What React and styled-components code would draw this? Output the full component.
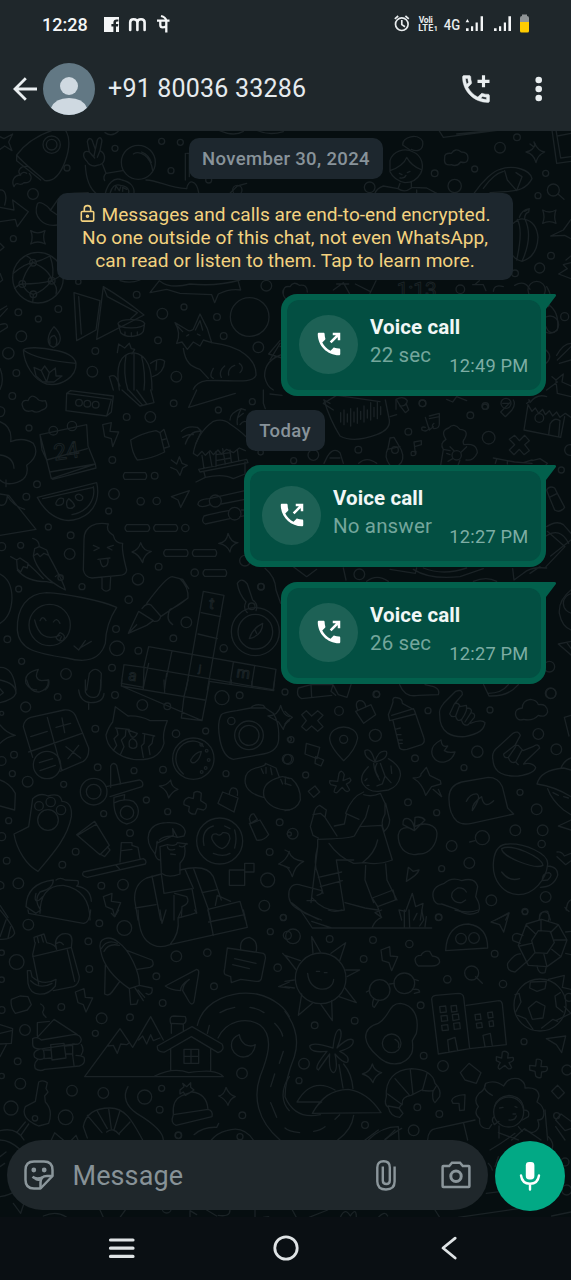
import React from "react";
import styled, { createGlobalStyle } from "styled-components";

const Global = createGlobalStyle`
  html, body { margin: 0; background: #0b1014; }
  * { box-sizing: border-box; }
  body { font-family: Roboto, "Noto Sans", sans-serif; }
`;

const Screen = styled.div`
  width: 571px;
  height: 1280px;
  display: grid;
  grid-template-rows: 131px 1086px 63px;
  overflow: hidden;
`;

const Header = styled.header`
  background: #1f272b;
  display: flex;
  flex-direction: column;
`;

const StatusBar = styled.div`
  height: 48px;
  padding: 0 42px 0 42px;
  display: flex;
  align-items: center;
  color: #f4f6f7;
`;

const Clock = styled.span`
  font-size: 18px;
  font-weight: 500;
  width: 62px;
`;

const StatusIcons = styled.svg`
  display: block;
  margin-left: ${(p) => (p.$end ? "auto" : 0)};
`;

const TitleBar = styled.div`
  height: 82px;
  display: flex;
  align-items: center;
  padding-left: 11px;
`;

const Icon = styled.svg`
  display: block;
  flex: none;
  margin-left: ${(p) => p.$gap || 0}px;
`;

const Contact = styled.h1`
  margin: 0 auto 0 13px;
  font-size: 25px;
  font-weight: 400;
  line-height: 30px;
  letter-spacing: 0.2px;
  color: #e6ebee;
`;

const Chat = styled.main`
  position: relative;
  background: #060e10;
  display: flex;
  flex-direction: column;
  padding: 7px 7px 6px;
`;

const Wallpaper = styled.svg`
  position: absolute;
  inset: 0;
  width: 571px;
  height: 1086px;
  fill: none;
  stroke: #1a2225;
  stroke-width: 4;
  stroke-linecap: round;
  stroke-linejoin: round;
`;

const Thread = styled.section`
  position: relative;
  flex: 1;
  display: flex;
  flex-direction: column;
`;

const DateChip = styled.div`
  align-self: center;
  width: ${(p) => p.$w}px;
  height: 41px;
  margin-top: ${(p) => p.$top || 0}px;
  margin-left: ${(p) => p.$shift || 0}px;
  border-radius: 10px;
  background: #1d272e;
  color: #88939a;
  font-size: 18.5px;
  font-weight: 500;
  line-height: 43px;
  text-align: center;
  letter-spacing: 0.35px;
  white-space: nowrap;
`;

const Notice = styled.div`
  align-self: center;
  width: 456px;
  height: 87px;
  margin: 14px 0 0 -2px;
  padding: 10px 0 0;
  border-radius: 10px;
  background: #1d272e;
  color: #f3d27f;
  font-size: 19.1px;
  line-height: 23px;
  text-align: center;
  white-space: nowrap;
`;

const NoticeLine = styled.div`
  display: flex;
  justify-content: center;
  gap: 7px;

  svg {
    margin-top: 1px;
  }
`;

const Bubble = styled.article`
  position: relative;
  align-self: flex-end;
  width: ${(p) => p.$w}px;
  height: 101.5px;
  margin: ${(p) => p.$top}px 19px 0 0;
  padding: 5.5px;
  border-radius: 16px 0 16px 16px;
  background: #02604c;
`;

const Tail = styled.svg`
  position: absolute;
  top: 0;
  right: -11px;
`;

const CallCard = styled.div`
  height: 100%;
  display: flex;
  padding: 15px 12px 0 12.5px;
  border-radius: 12px;
  background: #034f42;
`;

const CallBadge = styled.div`
  width: 59px;
  height: 59px;
  flex: none;
  border-radius: 50%;
  background: #1d6155;
  display: grid;
  place-items: center;
`;

const CallText = styled.div`
  margin-left: 12px;
  margin-top: -2px;
  flex: 1;
  min-width: 0;
`;

const CallTitle = styled.div`
  font-size: 20.5px;
  font-weight: 700;
  line-height: 28.5px;
  color: #f1f7f6;
  letter-spacing: 0.1px;
  white-space: nowrap;
`;

const CallDetail = styled.div`
  font-size: 20.5px;
  line-height: 29px;
  color: #74a69c;
  letter-spacing: 0.15px;
  white-space: nowrap;
`;

const CallTime = styled.time`
  align-self: flex-end;
  margin-bottom: 13.5px;
  font-size: 18.3px;
  line-height: 22px;
  color: #7dada4;
  letter-spacing: 0.2px;
  white-space: nowrap;
`;

const Composer = styled.footer`
  position: relative;
  display: flex;
  gap: 7px;
`;

const InputPill = styled.div`
  width: 481px;
  height: 70px;
  border-radius: 35px;
  background: #1f272b;
  display: flex;
  align-items: center;
  padding: 0 17.5px 0 17px;
`;

const Placeholder = styled.span`
  margin: 2px auto 0 18.5px;
  font-size: 27px;
  letter-spacing: 0.1px;
  color: #879297;
`;

const MicButton = styled.div`
  width: 70px;
  height: 70px;
  margin-top: 1px;
  border-radius: 50%;
  background: #02a985;
  display: grid;
  place-items: center;
`;

const NavBar = styled.nav`
  background: #0a0f13;
  display: flex;
  align-items: center;
  padding: 0 0 1px 108px;
`;

/* Wallpaper doodles, drawn in tiles at three units per pixel. */
const TILES = [
  {
    x: 0, y: 130,
    dots: "155,44,26 155,44,16 345,55,9 485,34,9 541,37,9 513,122,9 201,114,9 99,192,16 40,326,9 410,494,10 175,537,10 55,547,10 115,567,9 64,619,16 487,551,16 552,531,9 651,561,10 671,618,10 474,631,10 286,663,10 25,670,17 49,729,10 277,725,16 529,740,16 775,652,16 749,561,58 799,467,16 114,443,76 415,97,51 99,398,10 67,462,10 155,452,10 100,493,10 626,150,9 712,180,14 235,455,8",
    paths: [
      "M0 20L12 26L38 12L26 36L36 62L14 48L0 58",
      "M50 75C80 35 130 5 190-8C215 20 208 60 195 95C180 135 160 155 135 152C110 130 70 100 50 75ZM50 92L122 150M50 75V92",
      "M85 110C60 105 50 125 62 135C40 136 34 155 42 170C52 148 58 174 72 158C94 160 98 142 88 130M60 135Q70 122 80 130",
      "M315 8Q338 24 358 0M655 0Q700 22 730 4M760-5Q800 20 850 5",
      "M262 95C245 80 248 58 268 66L262 35C266 20 276 24 279 38L286 58L292 30C300 16 309 26 304 42L300 62C320 72 316 98 300 104L284 108Q266 106 262 95ZM268 66L284 84M286 58L282 78M300 62L292 82",
      "M256 106C258 145 268 175 290 192M308 104L318 130L368 122M318 130Q308 140 314 152",
      "M316 190C322 165 340 138 366 150C392 156 404 172 402 190M330 190C335 172 345 160 362 166C385 170 388 180 386 190M438 150C478 152 502 172 560 176M345 180L348 168L358 182L362 170M368 184V172L380 178",
      "M400 72C420 60 452 78 458 122M425 66C440 72 450 84 454 98",
      "M560 70H568V140M556 70V150M560 176C565 145 590 150 596 188M690 190L712 168L740 160",
      "M0 180C16 178 22 200 14 225M0 232L42 240L38 210L85 245L52 290L46 268L0 275M0 340L12 352L0 362M0 430L8 450L0 456",
      "M112 222C116 210 142 226 152 240L176 205M112 222C98 260 130 292 172 285M150 240L172 255M180 208C195 184 240 190 265 188",
      "M92 302Q113 315 135 302Q126 322 136 342Q113 330 92 342Q101 322 92 302Z",
      "M40 430Q75 400 99 398Q125 392 150 378M44 475Q58 462 67 462Q120 462 155 452Q180 440 189 430M99 398Q70 430 67 462Q80 490 100 493Q130 485 155 452Q150 420 99 398M80 378Q95 385 99 398M100 493L98 518M150 378Q165 420 155 452M155 452Q175 470 168 492",
      "M222 488L300 512L288 600L230 632ZM310 470Q370 505 432 555L290 628ZM236 500L244 612M310 470L322 500L412 548L392 566",
      "M354 580C360 566 425 564 434 580C436 596 356 600 354 580ZM354 580L362 608C380 626 420 620 430 604L434 580M375 606V616M394 608V620M412 606V616",
      "M450 488L478 452Q510 478 570 462Q650 470 720 450M450 488L500 478L540 490L635 494M635 494L644 518L655 492Q690 475 722 480L715 455M360 452Q390 462 420 450",
      "M70 660C75 650 130 652 160 660C195 664 225 680 228 700C230 740 185 770 140 762C100 750 72 700 70 660Q110 690 228 700M160 652C138 644 140 616 162 590C185 612 190 640 160 652ZM150 640Q145 620 163 616Q175 630 168 645",
      "M102 712L124 722L134 708L148 728L166 714L168 738L186 738L162 756H128L108 738ZM124 722L140 756M148 728L140 756",
      "M358 780C346 710 358 672 400 668C445 674 456 720 456 780M378 676Q368 730 384 780M402 670V780M424 676Q438 730 432 780M352 668L356 642L374 654L388 640L394 656L404 658L396 672M328 740Q345 730 352 750L360 768M328 740L340 780M452 700Q480 680 494 694Q492 730 458 740M470 692L468 720",
      "M525 578L562 600Q570 606 580 598L600 552L622 596L635 638L610 630L600 648L580 636L562 658L546 636L530 640Q544 610 525 578ZM548 605L532 588M586 600L600 572L608 600M560 618L566 614M592 612L600 616",
      "M635 638C725 648 770 690 768 736C758 764 690 748 620 752Q590 756 580 778M550 655C556 700 575 710 600 718L625 745M640 715Q625 740 640 745M674 708Q655 725 664 742M704 706Q682 715 686 735M720 728Q735 712 718 700",
      "M840 632L806 672Q850 685 858 688M858 645L840 650M850 672Q792 690 794 740Q800 770 820 780M0 540L20 528M0 584Q24 576 22 592L0 606M0 560L22 536M0 715Q14 750 0 778M850 480Q845 494 858 508",
    ],
  },
  {
    x: 270, y: 130,
    labels: [["1:13", 440, 500, 0, 62]],
    dots: "690,53,16 741,22,10 614,117,9 494,130,10 554,168,20 827,130,9 850,180,18 804,197,9 843,377,10 809,414,15 735,430,10 299,172,16 571,478,13 840,584,26 800,480,26 458,820,10 708,820,15 645,830,8 884,560,12",
    paths: [
      "M398 45C395 20 445 8 458 34C462 62 440 66 424 58M398 45L420 60",
      "M360 92C368 62 405 52 430 66C458 78 462 110 452 130Q436 158 405 158Q372 150 360 125ZM360 125V92M360 122C385 114 405 98 410 82Q425 108 452 118M388 130L396 134M412 128L420 124M390 144Q404 146 408 136M390 160L384 176Q404 190 424 174V156M384 176L340 168Q320 175 315 190M424 172L470 174L500 190M440 180V190",
      "M524 84Q522 68 544 70Q556 52 574 66Q594 66 594 84Q594 102 572 96Q560 112 544 104Q520 108 524 84Z",
      "M780 42Q800 60 792 36Q804 64 824 66Q802 76 798 98Q792 72 768 66Q790 62 796 42",
      "M506 0L520 22L690 0M560 12L660 2",
      "M846 0L860 100L903 94M858 0L872 84L903 80M862 18L903 10",
      "M612 190C640 150 672 122 690 118C730 104 780 118 786 146C770 178 740 182 716 184M704 122L712 150L740 182L756 140L738 128M640 175Q670 132 700 124M716 184L660 188",
      "M864 192L882 208",
      "M818 240Q838 252 858 240Q850 260 858 280Q838 270 818 280Q826 260 818 240Z",
      "M730 280Q748 262 765 268Q800 276 804 322Q802 380 756 394Q735 388 730 378M765 268Q790 320 756 394M742 268Q760 300 740 390M748 262Q755 240 778 236L776 246Q764 250 764 266M764 244L778 236",
      "M903 268L880 300L842 318L884 316L903 326M903 398L880 404L892 416L866 432L903 446M903 378L888 390",
      "M40 490Q38 466 60 470Q70 452 88 466Q112 462 112 486M190 480L220 458L238 490M256 462L300 484M318 452L300 490M200 462H236M608 464H640L648 482M628 452L614 464M670 484Q672 462 700 470",
      "M734 466Q764 448 780 478M830 470Q850 500 835 530M828 520Q870 540 862 600Q840 620 828 590M860 676Q880 640 903 640M862 690L903 650M868 700L903 690M828 660Q850 680 828 700",
      "M160 820L200 796L330 815M160 820L190 840M378 838V808Q400 796 412 812Q410 830 390 828M530 808L548 816L560 800L590 812M846 740L858 750L880 732L876 756L903 768M830 780L862 756M780 818Q800 790 830 800M858 752L862 790L903 800M0 690L30 640M0 792L36 796",
    ],
  },
  {
    x: 230, y: 400,
    dots: "535,95,10 721,46,10 766,18,10 776,113,19 385,149,10 577,10,10 994,210,9 191,182,9 388,523,16 928,54,13 958,800,16 963,880,15 877,832,9 440,883,9 250,165,16 93,560,9 1030,610,30 680,166,14 495,150,10 1020,150,16 45,482,16",
    paths: [
      "M282 0Q300 60 330 108Q370 130 440 104Q482 88 478 60L466 0M332 38V66M342 30V74M352 42V66M362 26V78M372 36V66M382 24V70M392 34V58M402 18V66M412 30V54M422 8V60M432 22V50M442 6V56M452 20V44",
      "M500 0L512 20L526 38L536 30L528 10M586 52L598 90L610 80M598 48L628 40V72M598 56L628 50M586 82Q572 78 576 90Q590 98 598 84M612 70Q602 78 612 86Q630 86 628 68M552 126L556 160M552 126L574 122V134L554 140M556 156Q540 150 544 166Q560 170 558 154",
      "M480 114L474 145Q460 170 480 196M480 114L492 112L514 150Q526 180 506 196M472 148L510 140M640 148Q628 130 648 118Q630 92 656 84Q672 66 690 88Q718 90 704 116Q696 124 702 134M640 148L632 196M640 148L660 152M702 134Q740 128 742 158Q730 184 708 180M690 180L684 196M672 152L660 140M694 156L710 140M668 176L654 184M650 160L660 164",
      "M838 118L854 106L868 122L884 106L898 122L884 134L898 152L882 164L868 148L852 164L838 150L854 134Z",
      "M790 174L854 186L906 190M800 178L796 190M832 182V192M906 182L930 176L952 190L944 200M880 188L906 180",
      "M894 14L906 34L916 24L926 40L938 28L946 44L958 32L968 48L980 36L990 52L1006 40L1023 52M894 14L882 90L992 112L1004 50M956 104L960 72Q972 50 990 62L986 110M890 10Q905 2 896 0",
      "M812 36L840 8M812 36L826 50L846 30Q858 12 850 0M818 10H838",
      "M950 270Q958 256 974 264L982 280L958 292ZM958 292L974 330Q990 340 1004 322L982 280",
      "M950 380Q980 360 1000 374L1023 400M952 394L1005 440L948 500M962 468L1023 420M948 408Q990 380 1016 430M900 520L930 500M848 506L852 540L880 520Q900 500 950 504",
      "M1023 570Q985 600 988 640Q996 680 1023 690M985 732L1023 724M985 732L1023 765M1012 730L1023 745",
      "M550 508Q600 540 690 530L760 506M580 504Q640 528 710 504M340 504L348 540M480 508L556 520L560 504M410 544Q440 520 475 544M730 544Q770 528 800 544",
      "M190 500L230 530L260 508M292 170Q310 140 330 158L340 190M282 190L292 170M300 174H330M386 190Q410 168 440 190",
      "M282 0L300 10M480 50L500 44",
    ],
  },
  {
    x: 0, y: 390,
    labels: [
      ["24", 202, 206, -8, 68],
      ["t", 633, 656, 8, 46],
      ["a", 396, 872, 8, 46],
      ["m", 728, 864, 8, 46],
      ["j", 598, 846, 8, 30],
    ],
    dots: "37,18,10 237,38,10 262,41,10 287,44,10 380,81,10 451,81,16 521,40,10 655,60,9 757,35,9 87,114,9 337,210,10 464,257,10 342,312,16 422,334,11 470,333,11 326,363,9 145,411,9 212,436,10 209,492,16 62,466,9 5,470,12 111,283,10 79,320,10 556,414,11 476,530,10 584,548,11 414,568,17 246,590,9 56,597,9 386,629,11 182,563,8 348,717,10 351,775,22 415,782,10 520,745,10 559,697,16 336,833,10 671,775,11 783,590,10 198,852,16 65,814,9 22,748,10 149,705,62 755,649,10 766,725,52 766,725,72 160,122,13 216,108,14 646,333,18 704,371,19 782,187,8",
    paths: [
      "M0 50Q16 52 14 66Q12 80 0 80M66 42Q68 28 84 32Q92 10 110 24Q118 36 136 32Q148 54 126 60Q110 72 96 62Q70 70 66 42Z",
      "M200 10L334 28L320 78L198 62ZM200 10L212 2L340 18L334 66L320 78",
      "M366 0L420 48L462 38L452 0M386 0L428 46M410 0L440 42",
      "M590 0L566 52Q640 30 706 10M790 0V40L796 56",
      "M0 95Q38 110 32 155Q70 140 100 160Q122 195 80 226Q90 270 40 280Q15 285 0 270M18 270V290M0 195Q40 200 42 235M0 312L26 316L108 418L0 436M22 318Q40 348 74 358M0 345Q20 350 22 318",
      "M120 134L260 104L264 168L286 222L154 266L140 210ZM120 134L126 180L140 210L262 176M150 246L286 222L288 234L158 268",
      "M308 104L334 98L330 124L356 126L338 170L334 146L314 140Z",
      "M392 150Q425 130 468 122L480 128L494 186Q450 208 412 210Q396 190 392 150ZM480 128L492 118L508 170L494 174M486 150L500 146",
      "M514 210L530 222L538 200L546 220L562 226L548 234L540 256L530 240L512 232",
      "M580 190Q590 130 640 94Q670 84 690 102Q720 122 738 140M580 190L592 198L606 184L616 196L630 182L640 194L654 180L664 192L680 178L700 188L718 174L736 182",
      "M544 124Q560 106 592 112L604 124Q570 120 556 162M548 142Q568 130 580 134M604 124L588 160M596 238L740 208L744 218L600 246ZM606 196L612 236M628 186L636 230M648 184V230M668 176L676 222M690 180L694 216M712 178L716 210M648 194L690 188M648 212L692 204M588 276L616 262L612 246M616 262Q670 250 700 266L735 252V216M690 90Q690 68 724 56Q708 84 712 104M724 56L736 60M712 84L730 70M720 104Q730 90 740 96",
      "M374 248H436Q444 258 436 268H374Q366 258 374 248ZM380 404H444Q454 414 444 424H380Q370 414 380 404ZM466 404H528Q538 414 528 424H466Q456 414 466 404ZM496 479H560Q568 489 560 499H496Q486 489 496 479ZM582 479H646Q654 489 646 499H582Q572 489 582 479ZM614 539H676Q684 549 676 559H614Q604 549 614 539Z",
      "M112 322L290 278C304 340 270 380 220 390C180 398 136 370 112 322ZM128 326L280 292M280 290C288 330 262 365 216 374M168 338Q176 320 190 326Q194 346 176 346Q166 346 168 338ZM202 352Q196 335 206 326Q220 336 224 348Q214 360 202 352ZM226 318Q236 306 248 320Q250 332 238 332Q226 330 226 318Z",
      "M514 320L568 302L542 352L534 330Z",
      "M628 326L735 302M664 342L735 328M628 326Q592 328 594 344Q602 356 630 344M686 362Q640 370 612 378Q602 396 616 402L690 386M724 360H738M720 380L738 376",
      "M250 540L252 448C252 405 290 396 325 402Q315 422 340 436Q345 460 368 460Q364 480 380 540Q378 556 358 556L276 564Q254 562 250 540ZM280 466L298 474L282 482M340 466L322 472L336 480M294 508L330 504M300 508Q304 532 312 530Q326 528 324 506M306 562V596Q318 610 330 598L332 560",
      "M656 460Q680 458 684 430Q694 460 714 458Q692 464 690 486Q682 464 656 460ZM396 486Q416 480 422 458Q430 484 454 484Q430 494 428 518Q416 492 396 486Z",
      "M32 500L50 510L60 504L84 520L82 534L70 530L62 546L52 536L50 510M98 445Q118 450 118 470L140 480L146 496L132 490L120 500L112 490L100 498L104 476L118 470M100 498Q116 560 196 600Q192 580 146 496M52 540Q80 575 140 575L164 580M84 522Q105 540 130 566M166 560Q180 545 188 562",
      "M350 652C300 630 190 610 140 608C80 610 50 655 52 720C56 780 110 790 200 804C260 820 300 810 316 760Q318 700 350 652ZM104 690Q120 760 180 736M120 692Q128 674 138 692M160 696Q170 680 180 700M168 742L180 728Q200 736 190 750Q176 758 168 742ZM180 750L184 740M222 768L236 780L256 752M240 774L274 754",
      "M385 730L416 664L460 692L440 706ZM426 656Q440 636 454 646L482 678Q480 696 462 694M440 640Q500 560 516 560L540 566Q566 590 564 624L482 680M516 560L548 568L566 596M564 624Q530 652 510 658Q495 690 518 704M385 730L410 704",
      "M610 604L672 616L622 900M610 604L558 900M604 668L662 680M594 732L652 746M446 770L828 838L820 896M446 770L432 830M372 824L432 832L822 900M372 824L364 880L430 892L446 820M516 782L500 860M700 818L690 880M764 828L754 890M432 830L430 892M500 850L494 896",
      "M712 580Q724 560 742 582L758 630M712 580Q716 610 738 636M738 636Q728 655 742 668M758 630Q776 642 768 662M748 746Q756 716 788 700Q788 736 748 746ZM764 718L770 730M795 535Q826 560 828 600L842 640",
      "M0 552Q36 570 36 625Q34 680 0 700M0 832Q40 830 48 900M115 838Q70 848 78 880Q90 900 110 900M115 838Q100 866 124 872L146 870Q150 890 135 900M260 900L268 850Q286 826 304 850L302 900",
    ],
  },
  {
    x: 0, y: 680,
    dots: "173,51,10 77,81,15 345,45,10 427,75,16 502,79,10 286,146,10 666,53,21 719,46,10 855,36,9 528,161,11 617,153,9 694,123,11 747,166,43 747,166,30 141,255,41 580,236,62 42,224,10 5,243,13 37,281,9 293,262,10 402,272,9 489,269,10 678,281,9 861,237,14 83,305,16 191,313,9 281,335,40 281,335,22 381,398,20 439,360,9 311,401,9 503,395,9 144,420,31 117,378,13 152,366,14 183,390,14 390,459,10 227,515,10 26,422,9 5,470,12 20,542,10 187,554,10 55,610,16 839,427,10 659,483,69 809,516,10 803,600,21 304,617,10 369,614,16 793,677,16 5,100,6 850,712,9 605,276,4 617,264,4 626,240,4 620,212,4 604,194,4 868,178,6 868,462,6",
    paths: [
      "M0 0Q48 10 48 40Q40 60 0 68M0 26L10 38L0 46M80 0Q90 38 118 36Q150 24 144 0M236 30Q240 66 272 68Q310 68 312 40M256 0V36Q264 54 284 52Q304 50 302 0M266 70V88",
      "M366 0L364 18L606 122L628 8M492 0L494 36M432 0L430 26M552 50L544 114L606 122M564 0L552 50M364 18L554 50L614 60M628 4L820 32L824 0M694 0V10M756 4V18",
      "M70 140Q72 118 92 112L192 90Q216 88 226 106L266 204Q268 232 250 244L180 274M70 140L98 232M142 112L186 272M86 216L246 160M92 170L142 154M168 142L212 130M186 114L194 158M198 200L242 234M236 196L204 236M118 248L158 236M120 272L166 256",
      "M346 80L384 108Q420 106 450 122L502 122Q486 160 492 190C480 232 450 242 400 238C350 230 320 200 318 165Q326 140 338 126ZM346 144L388 148M350 146L354 164L342 176L350 196L340 212M378 148L376 168L364 180L372 200L362 222M384 150L412 160Q404 176 394 170ZM428 160L464 168M434 162L432 190L424 198L430 232M460 168L456 190L446 200L450 224M388 200Q384 178 398 176Q414 182 410 200Q400 210 388 200Z",
      "M610 200C600 180 570 178 550 192C520 215 520 255 550 282M572 240Q584 218 604 214Q600 238 584 248Q572 250 572 240Z",
      "M664 104Q668 98 710 92L752 84Q762 70 790 76L796 84L820 100Q838 130 836 170C838 200 820 216 790 222L700 238Q670 232 660 180Q650 130 664 104ZM752 84L796 84M804 108Q836 106 842 76Q850 106 868 110M804 108L836 126L850 148Q854 130 868 122",
      "M0 135Q20 160 46 166Q20 170 0 190M0 300Q30 310 46 340L44 390L0 378",
      "M736 310Q730 270 775 262Q800 256 796 250L828 264L838 292M736 310Q742 340 790 352M792 350C784 315 810 300 838 292Q850 286 868 296M792 350Q810 390 868 390M784 266L790 280M798 262V280M812 264L816 284M842 298L848 312M856 296V312",
      "M318 320L418 300Q434 306 426 320L330 350M332 322V258Q340 244 350 256L362 312M342 352L374 344L372 360M342 352C340 380 344 425 380 432C420 425 424 385 400 364Q370 354 344 368",
      "M478 318Q500 318 512 300Q514 322 534 328Q516 334 506 354Q502 330 478 318Z",
      "M566 352L580 356L582 338Q594 330 604 340L602 362L618 372Q622 386 610 390L592 386L586 402Q572 404 566 394L568 380L552 374Q548 360 566 352Z",
      "M668 336L714 354L702 396L654 370ZM688 342Q690 322 702 324Q716 326 712 346",
      "M86 440Q96 372 98 356Q120 336 144 348Q180 336 186 364Q218 366 214 410C204 470 160 520 114 574C80 555 50 510 42 462Q60 454 86 440Z",
      "M230 464L284 424L328 496L300 524ZM232 466L290 432M300 522L314 530L330 510L322 500M360 546L364 488L396 488L396 496L414 502L420 536M366 512L396 508M250 576L430 536Q442 542 436 552L262 592Q242 588 250 576ZM348 556L358 566",
      "M464 520C430 480 440 430 500 428Q550 425 556 456L552 468L532 472L518 446M518 446L520 466L470 490Q475 470 466 520M532 472Q500 462 478 480M480 500L502 494Q530 500 532 488L562 492M502 500Q504 514 524 508M538 498Q550 506 560 490M480 500L484 580Q505 596 540 582V550Q560 530 554 500M464 520Q470 540 480 540M512 522L526 524",
      "M484 582L440 594Q402 612 404 660L414 720M456 588L482 720M484 582L492 640L576 626L590 700M522 646V720M540 570Q620 550 640 590L664 660M556 570L580 625M580 564L626 690M406 684L468 674M606 638L654 628M524 640L560 650Q572 670 546 680L544 712M624 688L720 664L736 720M624 688L632 720M646 676L652 646L692 664",
      "M636 478Q632 460 650 462Q660 470 668 458Q690 456 690 476Q684 500 666 506Q646 500 636 478ZM612 496Q602 450 640 438M704 450Q712 476 704 504M640 520Q670 532 690 520M674 438L690 446",
      "M748 416Q752 400 762 402L772 418L752 430ZM748 430L770 480Q790 484 806 464L780 420L750 432M734 550H762V576H734ZM688 570H734V616H688Z",
      "M78 680Q80 610 160 600Q160 626 120 636Q100 660 122 690L108 700ZM168 600Q180 590 196 600L234 602Q238 614 230 618M120 700C120 650 140 615 190 616Q270 630 270 720M230 618Q272 625 274 664M108 640Q100 670 118 660L128 650M310 650L336 640L334 664L362 668L344 710L338 688L318 680ZM0 604Q16 608 10 624L0 628M0 676L24 712M836 552Q860 540 868 514M836 552L868 564",
    ],
  },
  {
    x: 285, y: 680,
    dots: "274,43,10 162,93,13 429,92,9 615,90,9 797,40,16 760,162,16 814,208,16 577,215,17 390,235,10 537,263,9 176,178,12 271,166,18 18,179,9 10,238,15 62,285,9 369,367,10 455,398,9 705,337,9 755,388,16 691,451,16 773,451,16 770,492,11 592,473,21 500,498,16 553,549,16 470,566,9 23,461,16 619,661,16 782,651,16 720,694,9 461,712,9",
    paths: [
      "M40 24L78 14H144L160 44L186 52L198 14M40 24Q32 48 50 56L140 46M78 14L80 52M144 14L138 34L152 46M344 14Q360 54 400 46L460 44Q466 28 446 20L420 14M596 14L612 48Q670 50 700 14M610 40Q650 40 670 14M0 94Q10 106 22 112Q10 118 0 132",
      "M50 104L64 92L80 108L98 92L114 106L98 122L114 140L98 154L80 138L64 152L50 140L64 122Z",
      "M212 94L258 74L272 104L236 130ZM218 90Q208 68 222 62Q238 60 242 78M176 242Q134 200 134 174C138 130 214 130 218 174Q212 210 176 242Z",
      "M324 66Q320 48 340 54Q352 56 352 70L388 90L392 102L314 122L310 104Q320 80 324 66ZM324 122L344 204Q350 212 366 208L410 194Q422 186 416 172L392 102M320 106L386 86M330 148L346 144M334 164H348M338 180H352M342 190H352",
      "M464 104Q460 90 476 70L512 34Q534 26 532 44L508 72M464 104C464 160 500 172 540 170C580 162 598 150 600 128Q590 116 556 130M508 72L494 102Q500 114 512 108L524 76Q518 66 508 72M524 80L544 76Q550 90 530 118Q516 128 512 108M544 84Q564 84 558 98L540 126M558 98Q572 100 568 112L550 134Q536 140 530 122",
      "M692 106Q688 86 712 84Q712 62 736 58Q756 60 760 74Q786 70 788 96Q782 114 760 106Q744 124 716 118Q696 124 692 106ZM468 180Q430 200 444 230C462 258 500 248 510 216Q490 220 478 212L488 198Q470 204 468 180",
      "M624 240Q618 216 640 200L684 160Q700 150 706 166L690 196M624 240C626 280 660 290 700 288Q750 280 752 262Q740 246 716 252L722 244L764 204Q760 188 744 200L714 212L700 196L690 196L656 222Q656 236 670 232L692 200M670 232Q676 252 692 246L710 212M692 246L700 254",
      "M838 112L858 106M838 112L852 168M64 190L104 202L96 236L60 222ZM92 230L116 240L108 258L90 250ZM70 334L90 318L104 336L86 352Z",
      "M134 302L158 304L162 280Q170 266 178 284L174 302L194 294Q204 304 184 312L194 330Q186 342 172 322L156 338Q140 340 154 318L138 314Q132 308 134 302Z",
      "M268 246Q236 232 240 212Q258 200 270 246Q280 208 304 214Q312 236 270 246M250 260Q220 290 234 312Q250 336 280 334M276 250Q264 268 280 290M266 250Q268 276 284 300M310 236Q350 260 346 288Q340 320 310 330L280 334M286 250L300 288L292 312L276 318M300 288L318 308M318 258L320 280M246 296L240 302M246 316H252",
      "M236 336Q200 350 182 400L222 418M184 404L178 432L148 438M236 344Q260 352 286 340L300 370V402Q284 430 298 454Q314 440 314 420L302 370M252 376L242 412L224 440L290 436L322 540Q280 556 242 548L206 550Q160 530 132 490M224 440L208 468Q190 476 98 478M84 466L76 440L86 404Q90 380 104 376L124 390L120 412L156 468M84 404L106 400L120 412M84 466L100 474M278 480Q270 520 232 548",
      "M98 480V500L78 668M98 500Q84 550 98 580L114 640M154 540L178 690Q120 700 80 652M154 540H206M100 592L170 576M106 620L172 602M242 556L240 600L266 668M302 552L306 600L336 660M262 654L324 630L332 660L278 680ZM278 680L288 710M180 668L240 684L278 690M12 634Q20 606 50 616L110 632Q116 640 96 646M12 634Q6 670 40 688L100 718M66 662H92M20 668L60 700L110 720",
      "M0 510L12 516Q20 540 56 544Q30 556 22 590Q10 560 0 560M0 292L20 296Q48 320 46 360Q36 390 0 392M0 310L18 316",
      "M384 294Q410 294 408 282L424 262L434 286L466 302L468 312L440 320L422 346Q412 310 384 294ZM444 328L470 350L460 328",
      "M492 350Q494 316 530 306L610 292Q640 292 652 320L668 384L686 402L560 430Q530 436 516 424Q490 400 492 350ZM544 364Q556 340 576 342Q590 350 562 392Q560 370 590 350Q596 390 626 362",
      "M388 452C370 436 336 440 340 476C344 510 370 530 400 522C436 524 456 490 456 460C454 434 420 424 388 440M388 452L354 434Q352 412 370 416Q388 424 388 452L390 412Q410 408 420 420L390 450",
      "M370 562L384 574L402 570Q398 584 364 604ZM554 486L570 482M444 650Q440 620 478 610Q500 590 530 602Q570 590 578 620L572 650Q590 680 580 696Q550 712 520 690L470 672Q448 676 444 650ZM544 636Q536 622 518 624Q498 634 500 650Q508 670 530 668L542 660",
      "M626 540Q632 492 670 492C720 490 790 520 788 552C784 600 745 644 700 644C655 642 618 600 626 540ZM650 506C680 490 770 530 774 556C750 570 650 530 650 506ZM788 558Q820 560 818 586Q806 622 766 622M772 602Q770 580 792 578Q806 584 788 600ZM650 576Q672 606 704 596M816 516Q830 514 838 528Q848 524 858 520M816 530L842 554L858 542",
      "M756 312Q766 270 836 264L858 270M756 312Q810 320 858 350M788 326Q800 360 836 390L858 404M858 420L820 438L858 450M828 264Q838 240 858 234M804 338L820 346M836 350L850 354",
      "M350 720L342 690L362 694L382 640L392 680L414 670L406 720M632 720L672 698L662 720M762 720Q766 690 788 694L796 720M844 690Q846 664 858 660",
    ],
  },
  {
    x: 0, y: 910,
    dots: "85,44,16 298,40,10 373,54,22 50,156,22 265,94,10 268,177,10 529,139,16 622,128,11 833,173,11 811,65,9 850,23,9 642,229,10 469,199,10 488,279,10 184,291,10 390,322,10 305,325,16 286,370,9 75,360,16 53,454,10 61,521,16 33,594,21 216,542,16 197,622,22 310,549,16 434,561,21 479,599,10 485,535,9 726,490,16 727,616,10 5,128,8 5,209,8 5,300,10 5,498,8 105,625,8 862,76,12 535,676,10",
    paths: [
      "M0 0Q42 50 44 70Q36 90 0 88M0 80L18 30M24 84L32 50M84 0L86 10L250 40Q268 40 272 0M334 10L344 20L356 0",
      "M414 0Q416 70 440 92Q470 120 510 104L742 52L730 0M480 0L486 40L498 0M510 104Q540 70 534 24L572 14L590 8L584 0M534 24L545 0M624 0L640 76M626 36L734 14",
      "M104 96L102 82L132 72L140 98M112 80L116 98M124 76L130 96M106 98L98 134L116 222M98 140L214 112L238 200Q238 222 220 230L160 242M202 120L224 214M140 98Q168 104 170 118M170 118Q158 86 186 72Q216 66 216 92L214 112M170 100Q182 92 190 104M82 182H92L96 200Q130 230 168 208L166 228C140 262 92 262 84 220ZM92 212Q120 240 156 220",
      "M302 122C290 80 330 76 354 96C390 120 420 190 418 226L388 236C350 210 310 170 302 122ZM304 116Q320 86 352 100M312 124Q326 98 358 106M382 122L456 150Q466 166 450 172L412 178M316 164L314 252Q326 260 336 246L358 216M388 236L392 284L410 282L414 270M404 232L430 272M418 226L456 234Q460 250 446 254L438 250M414 240L434 262",
      "M496 228L590 178Q598 180 596 190L582 276Q576 288 568 276L548 242Q550 220 568 208Q540 226 542 242Q510 240 496 228Z",
      "M682 114L790 130Q798 134 796 146L784 206Q780 216 768 214L722 208L694 218L692 200L676 194Q670 190 674 176ZM722 116Q718 86 748 82Q776 92 768 126M704 146L768 160M698 164L748 176M848 130L868 152M836 230L868 234M836 230L868 216",
      "M226 246L252 236L256 262L278 264L258 306L250 284L234 278ZM34 268L60 258L84 260L94 284L82 300L46 310Q30 290 34 268ZM122 282Q138 290 128 306Q128 314 138 322",
      "M0 344L38 356L34 400L0 402M0 370L34 362M0 440L20 402M112 378V338L148 334M112 382L162 328L232 374M98 386Q112 378 124 390L220 374Q240 372 244 388Q242 406 222 402L128 416Q98 420 98 402ZM118 418Q96 424 104 442Q118 454 134 444M128 416Q134 426 132 444M112 450Q100 460 106 476Q120 486 134 478L238 468Q258 462 252 442Q244 436 228 436M244 404Q254 420 244 434M218 402V436L222 466M152 404L192 400L198 444L156 450ZM134 420H152M134 446L154 444M196 408L216 406M198 432H218",
      "M254 500L360 356L398 412L452 320L490 390M254 500H670M324 408L340 406L352 430L362 402L380 404L388 398M416 390L428 378L440 402L452 374L460 392L480 384",
      "M472 408L576 350L666 402Q676 420 654 428L574 380L494 426Q470 428 472 408ZM512 416V480M632 416V482M512 340Q506 318 522 318L556 320Q562 336 550 342L514 340V370M550 342V362M552 418H596V460H552ZM573 418V460M552 439H596M464 498Q520 470 566 488Q610 482 632 484Q660 488 668 498",
      "M718 374Q688 386 696 416C710 452 760 450 766 404Q754 412 736 404Q720 392 718 374Z",
      "M592 346C610 270 700 240 770 252C830 266 858 300 868 320M654 384C680 330 740 320 780 345C826 380 800 450 780 500C760 560 770 630 840 690M868 500C840 540 846 580 868 602M660 308Q680 296 704 292M750 292Q775 296 792 308M824 340Q844 360 848 378M850 424L838 460M824 492L812 530M812 578L830 622M622 370L628 346",
      "M116 516Q130 508 142 518L138 536L144 546L134 558L136 576Q160 600 146 640L116 648Q60 625 76 590L106 574ZM76 636L50 668M86 642L64 674M0 662Q50 650 72 690M154 690L164 668L190 690M215 690L228 676L234 690",
      "M250 650Q260 594 330 594C380 594 400 640 428 690M250 650L262 684M262 616L306 668M290 600L322 656M326 596L334 656M360 602L342 660M390 636L356 672M320 666Q340 650 358 674M384 530C366 560 380 590 410 610C460 640 490 665 490 690",
      "M520 614Q516 570 544 558L576 546Q620 550 624 598M520 614L624 598Q640 602 636 620L528 646Q510 640 520 614ZM540 540L552 530L548 520L560 530L572 518V532L582 540L570 548L556 556L550 546L540 552ZM656 558Q672 556 678 532Q686 554 706 560Q690 566 684 586Q676 566 656 558ZM582 674Q610 650 650 652L656 640M634 690Q650 670 680 662Q730 645 760 690",
    ],
  },
  {
    x: 285, y: 910,
    dots: "24,79,22 134,87,10 264,90,10 373,102,11 461,22,10 236,147,10 629,131,10 487,208,11 560,189,21 654,222,11 107,205,76 284,240,31 358,220,31 528,86,16 567,84,16 209,332,10 89,346,10 407,286,10 320,400,28 416,437,10 57,461,16 42,512,9 474,468,16 717,395,9 765,285,78 397,592,10 463,612,10 386,661,16 240,645,10 720,6,8 846,480,15 815,617,9 852,262,12 671,606,45",
    paths: [
      "M46 0L82 54H440M80 34L140 54M262 52Q270 30 290 22L270 8L290 0M358 54V0M374 50L372 0M396 10L386 30M410 0L416 30L404 48M424 20L420 50M510 0Q550 12 580 0M130 0Q150 8 170 0",
      "M84 130L80 80L106 126M138 130L182 98L164 152M182 180L224 180L186 200M180 234L214 278L162 260M140 272L142 332L108 284M82 280L40 316L50 252M28 234L0 230M28 210L0 214M46 152L0 136L34 180M68 190C72 250 144 250 146 208M94 184H104M118 188H126",
      "M314 222L328 220M252 242L244 246M388 208L400 212M266 266Q258 290 268 292L282 270M386 238Q404 236 404 246L388 250",
      "M288 120L314 110L316 138L338 140L320 182L312 158L292 152ZM390 148Q392 136 408 136Q416 120 434 124L442 138Q464 140 464 156Q460 168 440 168H400Q390 160 390 148Z",
      "M482 122Q486 44 550 42Q608 50 608 114Q545 118 482 122ZM572 200L592 220M618 36L672 10L656 66L644 44ZM852 4Q844 0 840 -8",
      "M700 106L724 42L770 28L820 44L846 90L828 140L786 170L730 166ZM740 92L760 62L796 64L808 98L786 130L750 128ZM768 28V62M820 44L796 68M846 90H808M828 140L800 118M786 170L776 130M724 158L750 128M704 108L740 100M724 46L752 72M764 28Q760 4 782 6Q798 12 790 34M706 100L684 92Q678 72 696 70L714 76M706 132Q690 130 668 160Q664 184 690 186L724 156M756 168Q760 194 780 188L784 170M842 66L858 64M842 130L858 134",
      "M730 294L754 274L780 288L774 324L742 328ZM736 216L784 214L780 236L756 244L734 234ZM690 254L702 250L708 276L692 306M698 316L722 326L744 358M770 354L804 328L818 334M834 306L814 290L810 258L826 248M790 208L838 196L832 232L858 238M838 290L858 310M812 332L858 310",
      "M440 268Q440 258 452 256L520 250Q534 250 536 262L554 416L460 432ZM544 286L642 272Q650 272 652 282L664 404L554 416M492 426L488 390L510 382L518 422M600 410L594 376L616 370L622 408M464 290L482 288L484 306L466 308ZM498 288L514 286L516 304L500 306ZM468 318L486 316L488 332L470 334ZM502 314L520 312L522 328L504 332ZM470 346L488 344L490 360L472 362ZM506 340L524 338L526 356L508 358ZM570 314L586 312L588 328L572 330ZM608 308L622 306L624 322L610 324ZM574 340L590 338L592 352L576 354ZM612 334L624 332L626 348L614 350Z",
      "M242 382Q242 350 280 340C315 320 310 280 346 280C385 284 404 320 394 370L382 392Q385 420 380 430C360 470 310 470 280 440Q244 410 242 382ZM330 388Q346 396 340 412",
      "M144 414Q150 358 164 358Q176 370 156 414Q190 380 204 390Q210 410 164 424Q196 438 188 456Q176 462 150 432Q160 480 146 488Q130 484 134 432L100 480Q84 474 126 424Q76 430 74 408Q84 394 144 414ZM162 464L174 534M176 462Q200 490 204 536",
      "M36 576Q80 500 150 540M36 576H110M82 610C110 560 140 540 190 538C240 545 270 580 288 608ZM82 610Q100 580 110 576M0 304Q50 370 28 440Q0 510 0 560Q30 630 106 614M0 654Q10 664 44 668M86 664Q108 660 120 650M150 628L164 614M206 616Q200 660 158 690",
      "M232 492Q256 486 262 462Q268 484 290 488Q270 496 264 518Q254 498 232 492ZM304 560C300 510 330 478 380 476C430 478 446 500 450 520Q470 540 464 560L450 578Q440 570 444 542Q430 545 410 540L378 556Q350 560 352 580L342 594L354 610L344 622Q316 620 310 592Q296 585 304 560ZM330 506L372 554M376 480L384 554M426 490L412 542M308 552L352 584M454 528L444 544M310 588L342 594",
      "M526 488L552 460L588 488L574 520L540 510ZM634 440L650 444L652 426Q662 420 670 430L668 444L684 442Q690 454 672 458L680 472Q672 484 660 466L644 478Q634 474 646 458L634 452ZM734 466L752 468L754 448Q764 446 770 452L768 470L786 470Q790 480 782 484L770 486L768 502Q758 506 752 498L750 484L734 480ZM784 386L842 378L830 428L814 404Z",
      "M500 572Q504 556 540 554L538 600L524 602L522 580H504ZM800 544L818 526L838 548L820 566ZM812 630L828 612L858 634M812 630L840 662L858 656",
      "M622 556Q590 540 602 520Q630 508 656 528Q670 500 700 506Q722 516 720 534Q760 530 762 558Q758 570 756 576Q780 590 776 616Q774 630 758 630Q770 660 740 668L720 660M602 520Q600 540 582 550Q564 570 580 590Q564 610 584 626Q580 656 612 656L620 644M628 590Q636 560 672 556Q712 560 716 596M628 620Q616 628 628 644L642 634M716 600Q736 600 730 620L712 630M644 594L654 592M690 590L696 592M684 612H692M672 630Q690 632 694 618M642 648V684M700 650L712 664M640 668L700 690M680 690L718 656L768 690",
      "M428 690Q430 658 452 656L570 630M536 640L548 690M250 690Q290 650 340 650L342 690M300 690L330 660M780 600L788 690M812 650L840 690",
    ],
  },
  {
    x: 0, y: 1130,
    dots: "535,16,9 500,235,14 720,20,9",
    paths: [
      "M0 30Q30 30 62 60M0 200Q60 190 70 150M40 220L62 250L72 220M130 258Q170 240 200 262M300 240L310 262M360 262L376 240M570 262V242L590 254M620 240L650 258M655 256Q690 262 690 240M765 240V262M790 262L806 260M0 80L18 66M0 110L14 100",
    ],
  },
  {
    x: 285, y: 1130,
    dots: "840,96,12 845,180,15",
    paths: [
      "M22 240L34 262M72 262L128 240M166 262Q180 230 196 258Q214 230 214 262M280 262Q300 240 308 258M450 240L464 262M610 100Q620 110 622 120M604 190L650 184M630 110L640 80M520 262L700 236M800 258L858 246M615 60Q650 40 690 10M790 20Q810 40 800 60M240 30L280 0M300 28Q340 0 350 -5",
    ],
  },
];

function Doodles() {
  return (
    <Wallpaper viewBox="0 131 571 1086" aria-hidden="true">
      {TILES.map((t) => (
        <g key={`${t.x}-${t.y}`} transform={`translate(${t.x} ${t.y}) scale(.33333)`}>
          {t.dots.split(" ").map((d, i) => {
            const [cx, cy, r] = d.split(",");
            return <circle key={i} cx={cx} cy={cy} r={r} />;
          })}
          {t.paths.map((d, i) => (
            <path key={i} d={d} />
          ))}
          {(t.labels || []).map(([s, x, y, angle, size]) => (
            <text
              key={s}
              transform={`translate(${x} ${y}) rotate(${angle})`}
              fontFamily="Roboto"
              fontSize={size}
              textAnchor="middle"
              strokeWidth="3"
            >
              {s}
            </text>
          ))}
        </g>
      ))}
    </Wallpaper>
  );
}

const PHONE =
  "M6.62 10.79c1.44 2.83 3.76 5.14 6.59 6.59l2.2-2.2c.27-.27.67-.36 1.02-.24 1.12.37 2.33.57 3.57.57.55 0 1 .45 1 1V20c0 .55-.45 1-1 1-9.39 0-17-7.61-17-17 0-.55.45-1 1-1h3.5c.55 0 1 .45 1 1 0 1.25.2 2.45.57 3.57.11.35.03.74-.25 1.02l-2.2 2.2z";
const PHONE_OUTLINE =
  "M6.54 5c.06.89.21 1.76.45 2.59l-1.2 1.2c-.41-1.2-.67-2.47-.76-3.79h1.51m9.86 12.02c.85.24 1.72.39 2.6.45v1.49c-1.32-.09-2.59-.35-3.8-.75l1.2-1.19M7.5 3H4c-.55 0-1 .45-1 1 0 9.39 7.61 17 17 17 .55 0 1-.45 1-1v-3.49c0-.55-.45-1-1-1-1.24 0-2.45-.2-3.57-.57-.1-.04-.21-.05-.31-.05-.26 0-.51.1-.71.29l-2.2 2.2c-2.83-1.45-5.15-3.76-6.59-6.59l2.2-2.2c.28-.28.36-.67.25-1.02C8.7 6.45 8.5 5.25 8.5 4c0-.55-.45-1-1-1z";

function CallMessage({ width, top, detail, time }) {
  return (
    <Bubble $w={width} $top={top}>
      <Tail width="12" height="18" viewBox="0 0 12 18">
        <path d="M0 0H9.5Q12 .5 10.5 2.6L1 15V18H0Z" fill="#02604c" />
      </Tail>
      <CallCard>
        <CallBadge>
          <svg width="30" height="30" viewBox="0 0 24 24">
            <path d={PHONE} fill="#fff" />
            <path d="M13.3 10.7L19.6 4.4M15 4H20V9" fill="none" stroke="#fff" strokeWidth="2" />
          </svg>
        </CallBadge>
        <CallText>
          <CallTitle>Voice call</CallTitle>
          <CallDetail>{detail}</CallDetail>
        </CallText>
        <CallTime>{time}</CallTime>
      </CallCard>
    </Bubble>
  );
}

export default function App() {
  return (
    <Screen>
      <Global />
      <Header>
        <StatusBar>
          <Clock>12:28</Clock>
          <StatusIcons width="68" height="20" viewBox="0 0 68 20">
            <path fill="#f4f6f7" fillRule="evenodd" d="M0 3H15V18H12V12.4H14L14.3 10H12V8.6Q12 7.6 13.2 7.6H14.4V5.4H12.6Q9.4 5.4 9.4 8.4V10H7.4V12.4H9.4V18H0Z" />
            <path fill="none" stroke="#f4f6f7" strokeWidth="2.6" strokeLinecap="round" d="M26.2 16V8.5Q26.2 5.2 29.6 5.2Q33.4 5.2 33.4 8.5V16M33.4 8.5Q33.4 5.2 37 5.2Q40.6 5.2 40.6 8.5V16" />
            <path fill="none" stroke="#f4f6f7" strokeWidth="2.3" d="M53 6.6H65.5M56.3 7V11Q56.3 13.4 58.8 13.4Q61 13.4 62.2 12M62.3 6.6V18.5M62.3 6.4Q61.4 3 57 2" />
          </StatusIcons>
          <StatusIcons $end width="137" height="24" viewBox="393 12 137 24">
            <g fill="none" stroke="#e8ecee" strokeWidth="1.7">
              <circle cx="401.8" cy="24.2" r="6.3" />
              <path d="M401.8 20V24.6L405 26.8M394.8 18.8L398.2 16M408.8 18.8L405.4 16" />
            </g>
            <g fill="#e8ecee" fontFamily="Roboto" fontWeight="700">
              <text x="418.7" y="22.6" fontSize="8.6" textLength="14">Voli</text>
              <text x="418.2" y="30.8" fontSize="9" textLength="15">LTE</text>
              <text x="433.8" y="30.8" fontSize="7">1</text>
              <text x="443.8" y="29.6" fontSize="15.5" fontWeight="500" textLength="16.4" lengthAdjust="spacingAndGlyphs">4G</text>
            </g>
            <path fill="#f4f6f7" d="M466 28.3h2.6v2.6H466zM471 26.3h2.2v4.6H471zM475.6 22.5h2.2v8.4h-2.2zM480.6 16.3h2.4v14.6h-2.4zM465.6 22.2L467.4 19L469.2 22.2zM494 28.3h2.6v2.6H494zM499 26.3h2.2v4.6H499zM503.8 22.5h2.2v8.4h-2.2zM508.4 16.3h2.6v14.6h-2.6z" />
            <path fill="#8f9496" d="M520 22V18Q520 16 522 16V14.4H527V16Q529 16 529 18V22Z" />
            <path fill="#fc0" d="M520 22H529V31Q529 32.6 527.5 32.6H521.5Q520 32.6 520 31Z" />
          </StatusIcons>
        </StatusBar>
        <TitleBar>
          <Icon width="30" height="30" viewBox="0 0 30 30" fill="none" stroke="#e9eef0" strokeWidth="2.8">
            <path d="M26 15H4M14.8 4.2L4 15L14.8 25.8" />
          </Icon>
          <Icon $gap="2" width="52" height="52" viewBox="0 0 52 52">
            <clipPath id="face"><circle cx="26" cy="26" r="26" /></clipPath>
            <g clipPath="url(#face)">
              <rect width="52" height="52" fill="#627884" />
              <circle cx="26" cy="23" r="9" fill="#cfd9e1" />
              <path d="M8 45Q12 35 26 35Q40 35 44 45V54H8Z" fill="#cfd9e1" />
            </g>
          </Icon>
          <Contact>+91 80036 33286</Contact>
          <Icon width="36" height="36" viewBox="0 0 24 24">
            <path d={PHONE_OUTLINE} fill="#e9eef0" stroke="#e9eef0" strokeWidth=".3" />
            <path d="M17 2.9V10.9M13 6.9H21" stroke="#e9eef0" strokeWidth="2.1" fill="none" />
          </Icon>
          <Icon $gap="41" width="37.5" height="30" viewBox="0 0 37.5 30" fill="#e9eef0">
            <circle cx="3.7" cy="6" r="3.3" /><circle cx="3.7" cy="15" r="3.3" /><circle cx="3.7" cy="24" r="3.3" />
          </Icon>
        </TitleBar>
      </Header>

      <Chat>
        <Doodles />
        <Thread>
          <DateChip $w={194}>November 30, 2024</DateChip>
          <Notice>
            <NoticeLine>
              <svg width="15" height="20" viewBox="0 0 15 20" fill="none" stroke="#f3d27f" strokeWidth="1.6">
                <rect x="1.3" y="7.5" width="12.4" height="9.6" rx="1" />
                <path d="M4.3 7.5V4.5Q4.3 1.6 7.5 1.6Q10.7 1.6 10.7 4.5V7.5" />
                <circle cx="7.5" cy="12.3" r="1" />
              </svg>
              Messages and calls are end-to-end encrypted.
            </NoticeLine>
            <NoticeLine>No one outside of this chat, not even WhatsApp,</NoticeLine>
            <NoticeLine>can read or listen to them. Tap to learn more.</NoticeLine>
          </Notice>
          <CallMessage width={265} top={14} detail="22 sec" time="12:49 PM" />
          <DateChip $w={79} $top={14.5} $shift={-2}>Today</DateChip>
          <CallMessage width={302} top={14} detail="No answer" time="12:27 PM" />
          <CallMessage width={265} top={15.5} detail="26 sec" time="12:27 PM" />
        </Thread>
        <Composer>
          <InputPill>
            <Icon width="30" height="30" viewBox="0 0 30 30" fill="none" stroke="#8b969b" strokeWidth="2.5">
              <path d="M16.5 28.5H10Q1.5 28.5 1.5 20V10Q1.5 1.5 10 1.5H20Q28.5 1.5 28.5 10V16Z" strokeLinejoin="round" />
              <path d="M16.5 28.5V22.5Q16.5 16 23 16H28.5" />
              <path d="M8.5 16.8Q12 19.8 18.8 17.4" />
              <path d="M9 17.5Q12 22 16 20.8V18.6Z" fill="#8b969b" stroke="none" />
              <circle cx="9.8" cy="10" r="2.4" fill="#8b969b" stroke="none" />
              <circle cx="20.2" cy="10" r="2.4" fill="#8b969b" stroke="none" />
            </Icon>
            <Placeholder>Message</Placeholder>
            <Icon width="20" height="31" viewBox="0 0 20 31" fill="none" stroke="#8b969b" strokeWidth="2.4">
              <path d="M18.6 6.5V21.5Q18.6 29.5 10 29.5Q1.3 29.5 1.3 21.5V7.5Q1.3 1.3 7.6 1.3Q13.8 1.3 13.8 7.5V20.5Q13.8 24 10.4 24Q6.8 24 6.8 20.5V6.5" />
            </Icon>
            <Icon $gap="44.5" width="30" height="28" viewBox="0 0 30 28" fill="none" stroke="#8b969b" strokeWidth="2.5">
              <path d="M2.3 5H8.2L11 1.8H19L21.8 5H27.7Q28.4 5 28.4 5.8V25.2Q28.4 26 27.7 26H2.3Q1.6 26 1.6 25.2V5.8Q1.6 5 2.3 5Z" />
              <circle cx="15" cy="15.3" r="5.2" strokeWidth="3" />
            </Icon>
          </InputPill>
          <MicButton>
            <svg width="24" height="32" viewBox="0 0 24 32" fill="none" stroke="#fff" strokeWidth="2.4">
              <rect x="7.8" y="2" width="8.6" height="17.5" rx="3.4" fill="#fff" stroke="none" />
              <path d="M3 15.5Q4.2 23.8 12 23.8Q19.8 23.8 21 15.5M12 23.8V29.5" strokeLinecap="round" />
            </svg>
          </MicButton>
        </Composer>
      </Chat>

      <NavBar>
        <Icon width="27" height="24" viewBox="0 0 27 24" fill="none" stroke="#dfe3e5" strokeWidth="3.2" strokeLinecap="round">
          <path d="M2.5 4H25M2.5 12.2H25M2.5 20.4H25" />
        </Icon>
        <Icon $gap="136.7" width="28" height="28" viewBox="0 0 28 28" fill="none" stroke="#dfe3e5" strokeWidth="2.8">
          <circle cx="14" cy="14" r="11.2" />
        </Icon>
        <Icon $gap="140.7" width="18" height="24" viewBox="0 0 18 24" fill="none" stroke="#dfe3e5" strokeWidth="2.8" strokeLinecap="round" strokeLinejoin="round">
          <path d="M15.2 2.2L3 12L15.2 22" />
        </Icon>
      </NavBar>
    </Screen>
  );
}
